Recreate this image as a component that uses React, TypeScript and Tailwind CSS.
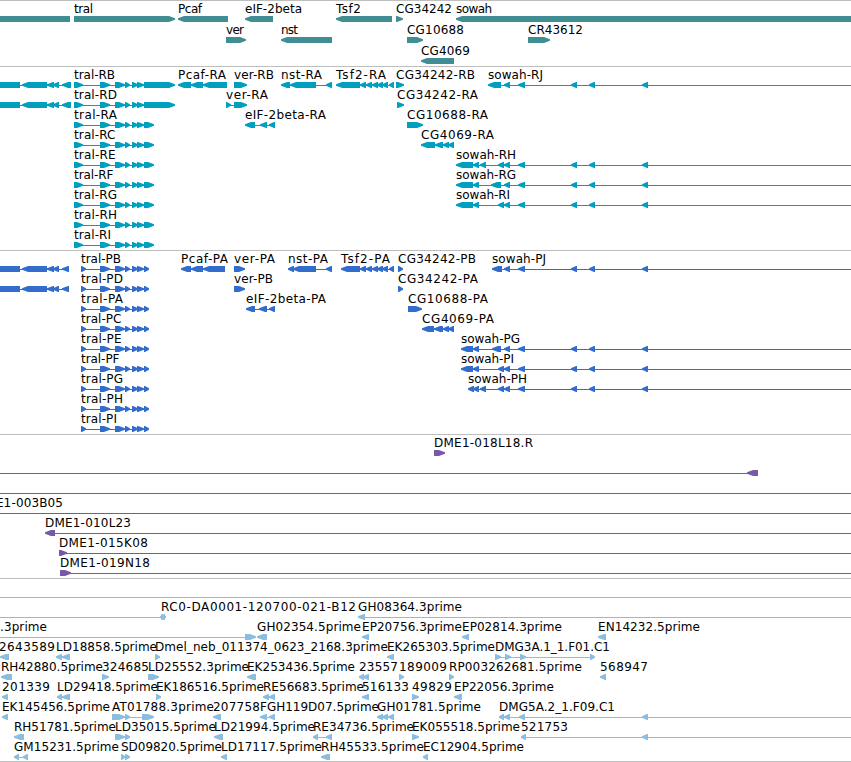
type Span = [number, number];

type Feature = {
    name?: string;
    // start and end of the label text
    label?: Span;
    dir: 'left' | 'right' | 'none';
    blocks: Span[];
    // connecting line, when it is not simply first block to last block
    line?: Span;
};

type TrackData = {
    id: string;
    color: string;
    height: number;
    pitch: number;
    rows: Feature[][];
};

const WIDTH = 851;
const BAR_TOP = 16;
const BAR_HEIGHT = 6;

const left = (name: string, label: Span, blocks: Span[], line?: Span): Feature => ({ name, label, dir: 'left', blocks, line });
const right = (name: string, label: Span, blocks: Span[], line?: Span): Feature => ({ name, label, dir: 'right', blocks, line });

const sowahTail: Span[] = [[518, 525], [571, 577], [589, 595], [642, 648]];
const tsf2Tail: Span[] = [[360, 366], [366, 372], [372, 378], [377, 383], [382, 388], [389, 394]];

const sowah = (name: string, label: Span, blocks: Span[]) =>
    left(name, label, [...blocks, ...sowahTail], [label[0] + 3, WIDTH]);

const tralMiddle: Span[] = [[100, 110], [115, 125], [125, 130], [132, 138], [137, 144]];
const tralR = (name: string, end: number, last = 154) =>
    right(name, [74, end], [[74, 83], ...tralMiddle, [144, last]]);
const tralP = (name: string, end: number) =>
    right(name, [81, end], [[81, 86], ...tralMiddle, [144, 149]]);

const upstream = (end: number): Feature[] => [
    { dir: 'none', blocks: [[0, 20]], line: [0, end] },
    { dir: 'left', blocks: [[22, 47], [47, 54], [53, 59], [62, end]] },
];

const tracks: TrackData[] = [
    {
        id: 'genes',
        color: '#408e94',
        height: 66,
        pitch: 21,
        rows: [
            [
                { dir: 'none', blocks: [[0, 70]] },
                right('tral', [74, 93], [[74, 175]]),
                left('Pcaf', [178, 202], [[178, 228]]),
                left('eIF-2beta', [245, 302], [[245, 273]]),
                left('Tsf2', [336, 361], [[336, 392]]),
                right('CG34242', [396, 452], [[396, 403]]),
                left('sowah', [456, 492], [[456, 851]]),
            ],
            [
                right('ver', [226, 244], [[226, 246]]),
                left('nst', [281, 298], [[281, 332]]),
                right('CG10688', [407, 464], [[407, 423]]),
                right('CR43612', [528, 583], [[528, 550]]),
            ],
            [left('CG4069', [421, 470], [[421, 454]])],
        ],
    },
    {
        id: 'transcripts',
        color: '#009fc0',
        height: 184,
        pitch: 20,
        rows: [
            [
                ...upstream(71),
                tralR('tral-RB', 115, 175),
                left('Pcaf-RA', [178, 226], [[178, 191], [191, 203], [203, 227]]),
                right('ver-RB', [234, 274], [[234, 247]]),
                left('nst-RA', [281, 322], [[281, 290], [290, 316], [326, 332]]),
                left('Tsf2-RA', [336, 386], [[336, 360], ...tsf2Tail]),
                right('CG34242-RB', [396, 475], [[396, 404]]),
                sowah('sowah-RJ', [488, 543], [[488, 501], [504, 510]]),
            ],
            [
                ...upstream(71),
                tralR('tral-RD', 117, 175),
                right('ver-RA', [226, 268], [[226, 231], [234, 247]]),
                right('CG34242-RA', [397, 478], [[397, 404]]),
            ],
            [
                tralR('tral-RA', 117),
                left('eIF-2beta-RA', [245, 326], [[245, 255], [260, 267], [269, 275]]),
                right('CG10688-RA', [407, 488], [[407, 423]]),
            ],
            [
                tralR('tral-RC', 115.5),
                left('CG4069-RA', [421, 494], [[421, 435], [435, 443], [443, 449], [448, 454]]),
            ],
            [
                tralR('tral-RE', 115.5),
                sowah('sowah-RH', [456, 516], [[456, 473], [473, 479], [480, 486], [498, 504], [504, 510]]),
            ],
            [
                tralR('tral-RF', 113.5),
                sowah('sowah-RG', [456, 516], [[456, 473], [473, 479], [491, 501], [504, 510]]),
            ],
            [
                tralR('tral-RG', 117),
                sowah('sowah-RI', [456, 510], [[456, 473], [473, 479], [498, 504], [504, 510]]),
            ],
            [tralR('tral-RH', 117)],
            [tralR('tral-RI', 111)],
        ],
    },
    {
        id: 'proteins',
        color: '#336dcc',
        height: 184,
        pitch: 20,
        rows: [
            [
                ...upstream(69),
                tralP('tral-PB', 121),
                left('Pcaf-PA', [181, 228], [[181, 191], [191, 203], [203, 225]]),
                right('ver-PA', [234, 275], [[234, 245]]),
                left('nst-PA', [288, 328], [[288, 294], [293, 316], [326, 332]]),
                left('Tsf2-PA', [341, 390], [[341, 360], ...tsf2Tail]),
                right('CG34242-PB', [398, 476], [[398, 403]]),
                sowah('sowah-PJ', [492, 546], [[492, 502], [504, 510]]),
            ],
            [
                ...upstream(69),
                tralP('tral-PD', 123),
                right('ver-PB', [234, 273], [[234, 245]]),
                right('CG34242-PA', [398, 478], [[398, 403]]),
            ],
            [
                tralP('tral-PA', 123),
                left('eIF-2beta-PA', [246, 326], [[246, 255], [259, 267], [269, 275]]),
                right('CG10688-PA', [408, 488], [[408, 422]]),
            ],
            [
                tralP('tral-PC', 121.5),
                left('CG4069-PA', [422, 494], [[422, 434], [434, 443], [443, 449], [448, 454]]),
            ],
            [
                tralP('tral-PE', 121.5),
                sowah('sowah-PG', [461, 520], [[461, 473], [473, 479], [492, 501], [504, 510]]),
            ],
            [
                tralP('tral-PF', 119.5),
                sowah('sowah-PI', [461, 514], [[461, 473], [473, 479], [498, 504], [504, 510]]),
            ],
            [
                tralP('tral-PG', 123),
                sowah('sowah-PH', [468, 527], [[468, 474], [473, 479], [480, 486], [498, 504], [504, 510]]),
            ],
            [tralP('tral-PH', 123)],
            [tralP('tral-PI', 117)],
        ],
    },
    {
        id: 'clones',
        color: '#7859a9',
        height: 144,
        pitch: 20,
        rows: [
            [right('DME1-018L18.R', [434, 533], [[434, 445]])],
            [{ dir: 'left', blocks: [[747, 758]], line: [0, 758] }],
            [{ dir: 'none', blocks: [], line: [0, WIDTH] }],
            [{ name: 'DME1-003B05', label: [-24, 63], dir: 'none', blocks: [], line: [0, WIDTH] }],
            [left('DME1-010L23', [45, 131], [[45, 55]], [55, WIDTH])],
            [right('DME1-015K08', [59, 148], [[59, 67]], [59, WIDTH])],
            [right('DME1-019N18', [60, 150], [[60, 71]], [60, WIDTH])],
        ],
    },
    {
        id: 'ests',
        color: '#8abddf',
        height: 183,
        pitch: 20,
        rows: [
            [{ dir: 'none', blocks: [], line: [0, WIDTH] }],
            [
                { dir: 'left', blocks: [[160, 165]], line: [0, 163] },
                right('RC0-DA0001-120700-021-B12', [161, 356], [[161, 166]]),
                left('GH08364.3prime', [358, 462], [[358, 365]], [362, WIDTH]),
            ],
            [
                right('.3prime', [0, 47], [[245, 256]], [0, 250]),
                left('GH02354.5prime', [257, 361], [[257, 267]]),
                left('EP20756.3prime', [362, 462], [[362, 369]]),
                left('EP02814.3prime', [462, 562], [[462, 469]]),
                left('EN14232.5prime', [598, 700], [[598, 606]]),
            ],
            [
                left('2643589', [-1, 55], [[0, 9]]),
                left('LD18858.5prime', [56, 157], [[56, 62], [62, 70]]),
                right('Dmel_neb_011374_0623_2168.3prime', [155, 388], [[155, 160]]),
                left('EK265303.5prime', [387, 495], [[387, 394]]),
                right('DMG3A.1_1.F01.C1', [495, 610], [[495, 501], [505, 511], [520, 526], [590, 595]]),
            ],
            [
                left('RH42880.5prime', [1, 103], [[1, 12]]),
                right('324685', [102, 149], [[102, 109]]),
                right('LD25552.3prime', [148, 249], [[148, 159]]),
                left('EK253436.5prime', [247, 355], [[247, 256]]),
                left('23557', [359, 398], [[359, 364], [363, 369]]),
                right('189009', [399, 447], [[399, 404]]),
                right('RP003262681.5prime', [449, 582], [[449, 454]]),
                left('568947', [600, 648], [[600, 606]]),
            ],
            [
                left('201339', [2, 50], [[2, 8]]),
                left('LD29418.5prime', [57, 158], [[57, 62], [62, 70]]),
                right('EK186516.5prime', [156, 264], [[156, 161]]),
                left('RE56683.5prime', [263, 364], [[263, 269], [269, 275]]),
                left('516133', [362, 409], [[362, 369]]),
                right('49829', [412, 452], [[412, 419]]),
                left('EP22056.3prime', [454, 554], [[454, 462]]),
            ],
            [
                left('EK145456.5prime', [2, 110], [[2, 8]]),
                right('AT01788.3prime', [112, 214], [[112, 125], [125, 130], [142, 154]]),
                left('207758', [213, 260], [[213, 221]]),
                left('FGH119D07.5prime', [260, 379], [[260, 267], [269, 275]]),
                left('GH01781.5prime', [377, 481], [[377, 383], [382, 388], [388, 394]]),
                left('DMG5A.2_1.F09.C1', [499, 615], [[499, 504], [504, 510], [519, 525], [642, 648]], [499, WIDTH]),
            ],
            [
                left('RH51781.5prime', [14, 116], [[14, 24]]),
                right('LD35015.5prime', [115, 216], [[115, 125], [125, 130]]),
                left('LD21994.5prime', [214, 315], [[214, 223]]),
                left('RE34736.5prime', [313, 414], [[313, 318], [326, 332]]),
                right('EK055518.5prime', [412, 520], [[412, 419]]),
                left('521753', [521, 568], [[521, 526], [642, 648]], [521, WIDTH]),
            ],
            [
                left('GM15231.5prime', [14, 119], [[14, 19], [23, 28]]),
                right('SD09820.5prime', [121, 222], [[121, 125], [125, 130]]),
                left('LD17117.5prime', [221, 322], [[221, 227]]),
                left('RH45533.5prime', [321, 424], [[321, 330]]),
                left('EC12904.5prime', [423, 524], [[423, 428]]),
            ],
        ],
    },
];

const blockPoints = ([start, end]: Span, dir: Feature['dir'], top: number) => {
    const bottom = top + BAR_HEIGHT;
    const mid = top + BAR_HEIGHT / 2;
    // short exons are all arrow head, with the nose one pixel blunt
    const tip = Math.min(end - start - 1, 6);
    if (dir === 'left') {
        return `${start},${mid - 0.8} ${start + tip},${top} ${end},${top} ${end},${bottom} ${start + tip},${bottom} ${start},${mid + 0.8}`;
    }
    if (dir === 'right') {
        return `${start},${top} ${end - tip},${top} ${end},${mid - 0.8} ${end},${mid + 0.8} ${end - tip},${bottom} ${start},${bottom}`;
    }
    return `${start},${top} ${end},${top} ${end},${bottom} ${start},${bottom}`;
};

const FeatureGlyph = ({ feature, top }: { feature: Feature; top: number }) => {
    const { name, label, blocks, dir } = feature;
    const line = feature.line ?? (blocks.length > 1 ? [blocks[0][0] + 2, blocks[blocks.length - 1][1] - 2] : null);
    return (
        <g>
            {line && <rect x={line[0]} y={top + 3} width={line[1] - line[0]} height={1} />}
            {blocks.map((block) => (
                <polygon key={block[0]} points={blockPoints(block, dir, top)} />
            ))}
            {name && label && (
                <text className="fill-black" x={label[0]} y={top - 3} textLength={label[1] - label[0]}>
                    {name}
                </text>
            )}
        </g>
    );
};

const Track = ({ track }: { track: TrackData }) => (
    <section className="w-full border-t border-[#bebebe]">
        <svg
            className="block overflow-hidden font-['DejaVu_Sans',sans-serif] text-[12px]"
            width={WIDTH}
            height={track.height - 1}
            viewBox={`0 1 ${WIDTH} ${track.height - 1}`}
            fill={track.color}
        >
            {track.rows.map((row, rowIndex) =>
                row.map((feature, index) => (
                    <FeatureGlyph
                        key={`${track.id}-${rowIndex}-${index}`}
                        feature={feature}
                        top={BAR_TOP + rowIndex * track.pitch}
                    />
                ))
            )}
        </svg>
    </section>
);

export default function App() {
    return (
        <main className="flex w-[851px] flex-col overflow-hidden border-b border-[#bebebe] bg-white">
            {tracks.map((track) => (
                <Track key={track.id} track={track} />
            ))}
        </main>
    );
}
